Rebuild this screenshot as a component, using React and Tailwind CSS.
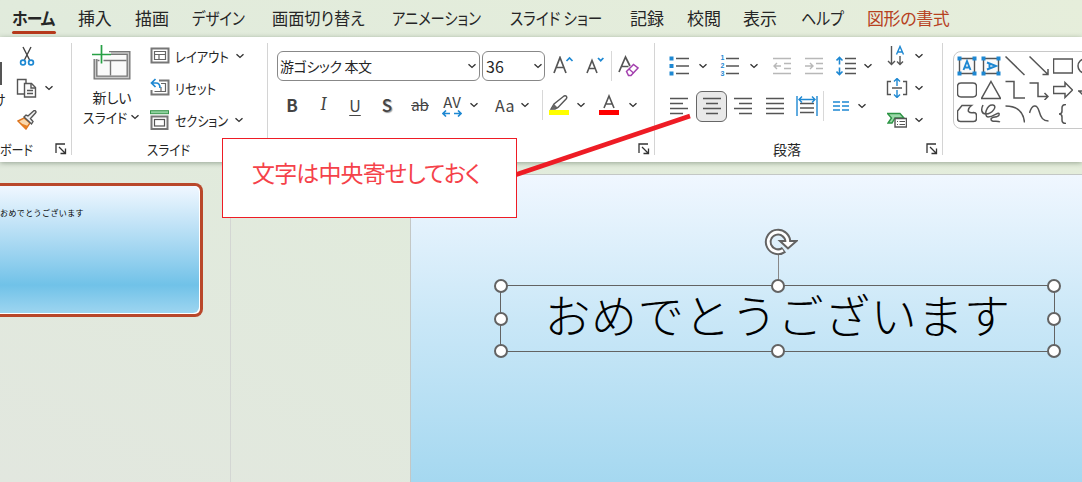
/**
 * Presentation editor: tab strip, home ribbon, slide thumbnails and canvas,
 * with a callout that points at the "center" alignment button.
 */
const TABS = [
    { label: "挿入", className: "w-[57px]", textClass: "tracking-[-0.3px]" },
    { label: "描画", className: "w-[57px]", textClass: "" },
    { label: "デザイン", className: "w-[80px]", textClass: "scale-x-[0.85]" },
    { label: "画面切り替え", className: "w-[120px]", textClass: "scale-x-[0.95]" },
    { label: "アニメーション", className: "w-[118px]", textClass: "scale-x-[0.84]" },
    { label: "スライド ショー", className: "w-[120px]", textClass: "scale-x-[0.86]" },
    { label: "記録", className: "w-[57px]", textClass: "" },
    { label: "校閲", className: "w-[56px]", textClass: "" },
    { label: "表示", className: "w-[58px]", textClass: "" },
    { label: "ヘルプ", className: "w-[66px]", textClass: "scale-x-[0.88]" },
];

function Icon({ w = 20, h = 20, className = "", children }) {
    return (
        <svg
            width={w}
            height={h}
            viewBox={`0 0 ${w} ${h}`}
            fill="none"
            stroke="#555"
            strokeWidth="1.4"
            className={`shrink-0 ${className}`}
        >
            {children}
        </svg>
    );
}

function Cell({ className = "w-8", children }) {
    return (
        <div className={`flex h-8 shrink-0 items-center justify-center ${className}`}>
            {children}
        </div>
    );
}

function Chevron({ className = "w-4" }) {
    return (
        <Cell className={className}>
            <Icon w={10} h={6}>
                <path d="M1.5 1.2 5 4.4 8.5 1.2" stroke="#333" strokeWidth="1.4" />
            </Icon>
        </Cell>
    );
}

function Divider() {
    return <div className="h-[30px] w-px shrink-0 bg-[#d8d8d8]" />;
}

function Launcher() {
    return (
        <Icon w={12} h={12} className="mr-1">
            <path d="M1 10V1h9M4 4l6 6M10.5 5.5v5h-5" stroke="#333" strokeWidth="1.3" />
        </Icon>
    );
}

function Group({ label, launcher = true, className = "", labelClass = "", children }) {
    return (
        <section className={`flex h-[125px] shrink-0 items-start ${className}`}>
            <div className="flex h-full min-w-0 grow flex-col pt-[3px]">
                <div className="flex h-24">{children}</div>
                <div className="flex h-[26px] items-center">
                    <div className="grow whitespace-nowrap text-sm">
                        <span className={`inline-block origin-left ${labelClass}`}>{label}</span>
                    </div>
                    {launcher && <Launcher />}
                </div>
            </div>
            <div className="mt-1.5 h-28 w-px shrink-0 bg-[#d4d4d4]" />
        </section>
    );
}

function ClipboardGroup() {
    return (
        <Group label="ボード" className="w-[72px]" labelClass="scale-x-[0.86]">
            <div className="w-4 shrink-0 overflow-hidden">
                <div className="mt-[22px] h-[23px] w-[1.5px] bg-[#555]" />
                <div className="-ml-2 mt-1 text-sm">け</div>
            </div>
            <div>
                <Cell className="w-[21px]">
                    <Icon w={16}>
                        <path d="M4 1 10.6 14M12 1 5.4 14" stroke="#444" />
                        <circle cx="4" cy="16.5" r="2.4" stroke="#1e88d2" strokeWidth="1.7" />
                        <circle cx="12" cy="16.5" r="2.4" stroke="#1e88d2" strokeWidth="1.7" />
                    </Icon>
                </Cell>
                <Cell className="w-[21px]">
                    <Icon w={21}>
                        <path d="M8 16H1.5V1.5H10V5" />
                        <path d="M8.5 5.5h7l4 4v9.500h-11z" fill="#fafafa" />
                        <path d="M15 5.500V10h4.500M11 12.500h6M11 15.500h6" />
                    </Icon>
                </Cell>
                <Cell className="w-[21px]">
                    <Icon>
                        <path d="m1 11 6-3 6 5-4 6z" fill="#f9d8ac" stroke="#dd741d" />
                        <path d="m3 13 8 3-2.500 3z" fill="#e98023" stroke="none" />
                        <path d="m7 7 7.500 7 1.500-2.500-2.500-3 5-5.500a1.300 1.300 0 0 0-2-2l-5.500 5L9 5z" fill="#eee" />
                    </Icon>
                </Cell>
            </div>
            <div className="pt-8">
                <Chevron className="ml-1 w-4" />
            </div>
        </Group>
    );
}

function SlidesGroup() {
    return (
        <Group
            label="スライド"
            launcher={false}
            className="w-[196px]"
            labelClass="ml-[75px] scale-x-90"
        >
            <div className="ml-2.5 flex w-[60px] flex-col items-center pt-[5px]">
                <Icon w={40} h={35}>
                    <path d="M3.500 14v18.500h33V8H17" stroke="#777" strokeWidth="4" fill="#fafafa" />
                    <path d="M3.500 14v18.500h33V8H17" stroke="#c9c9c9" strokeWidth="1.300" />
                    <path d="M5.500 15.500h29M18.500 15.500v15" stroke="#777" />
                    <path d="M0 9.500h19M9.500 0v18.500" stroke="#fff" strokeWidth="4" />
                    <path d="M0 9.500h19M9.500 0v18.500" stroke="#27a045" strokeWidth="1.700" />
                </Icon>
                <div className="mt-[7px] h-5 text-sm leading-5">新しい</div>
                <div className="flex h-5 items-center whitespace-nowrap text-sm leading-5">
                    <span className="w-[44px] origin-left scale-x-[0.92]">スライド</span>
                    <Chevron className="ml-0.5 w-3" />
                </div>
            </div>
            <div className="ml-2 whitespace-nowrap text-sm">
                <div className="flex h-8 items-center">
                    <Icon>
                        <rect x="1.500" y="2.500" width="17" height="14" strokeWidth="2" stroke="#777" />
                        <path d="M4.500 5.500h11v8h-11zM4.500 8.500h11M9 8.500v5" stroke="#666" strokeWidth="1.200" />
                    </Icon>
                    <span className="ml-[5px] w-14 origin-left scale-x-[0.88]">レイアウト</span>
                    <Chevron className="ml-px w-4" />
                </div>
                <div className="flex h-8 items-center">
                    <Icon>
                        <path d="M9 2.500h9.500v14h-17V12" strokeWidth="2" stroke="#777" />
                        <path d="M11 5.500h4.500v8h-11M11 9v4" strokeWidth="1.200" stroke="#666" />
                        <path d="M5.500 1 1.500 5l4 4M2 5h4q4 0 4 5" stroke="#1e88d2" strokeWidth="1.700" />
                    </Icon>
                    <span className="ml-[5px] w-14 origin-left scale-x-[0.88]">リセット</span>
                </div>
                <div className="flex h-8 items-center">
                    <Icon>
                        <rect x="0.500" y="0.700" width="18" height="3" fill="#8fd19e" stroke="#39964d" strokeWidth="1" />
                        <rect x="1.500" y="6.500" width="16" height="12.500" strokeWidth="2" stroke="#777" />
                        <rect x="4.500" y="9.500" width="10" height="6.500" strokeWidth="1.200" />
                    </Icon>
                    <span className="ml-[5px] w-14 origin-left scale-x-[0.86]">セクション</span>
                    <Chevron className="w-4" />
                </div>
            </div>
        </Group>
    );
}

function FontGroup() {
    return (
        <Group label="" className="w-[387px]">
            <div className="flex grow flex-col">
                <div className="mt-[11px] flex h-[30px] items-center pl-[9px]">
                    <div className="flex h-[30px] w-[203px] items-center justify-between rounded-md border border-[#888] pl-0.5 pr-px">
                        <span className="text-sm tracking-[-0.4px]">游ゴシック 本文</span>
                        <Chevron className="w-3" />
                    </div>
                    <div className="ml-0.5 flex h-[30px] w-[63px] items-center justify-between rounded-md border border-[#888] pl-[3px]">
                        <span className="text-base">36</span>
                        <Chevron className="w-3" />
                    </div>
                    <Cell className="ml-0.5 w-8">
                        <Icon w={22} h={20}>
                            <path d="M2 17 8 1.500 14 17M4.500 11.500h7.500" strokeWidth="1.700" />
                            <path d="m14.500 5 3-3 3 3" stroke="#1e88d2" strokeWidth="1.700" />
                        </Icon>
                    </Cell>
                    <Cell className="w-8">
                        <Icon w={20} h={20}>
                            <path d="M2 17 7 4.500 12 17M4 12.500h6.500" strokeWidth="1.600" />
                            <path d="m13 2 2.700 2.700L18.400 2" stroke="#1e88d2" strokeWidth="1.700" />
                        </Icon>
                    </Cell>
                    <Divider />
                    <Cell className="w-8">
                        <Icon w={22} h={22}>
                            <path d="M2 17 8.500 2 13 11M4.500 11.500h7" strokeWidth="1.700" />
                            <path d="m9.500 16.500 7-7 4.500 3.500-7 7.500h-2.500z" stroke="#a33fae" fill="#fff" strokeWidth="1.500" />
                            <path d="m12 14 4.500 4" stroke="#a33fae" />
                        </Icon>
                    </Cell>
                </div>
                <div className="mt-2 flex h-8 items-center pl-2 text-base text-[#444]">
                    <Cell><b className="text-[17px]">B</b></Cell>
                    <Cell className="w-[31px]"><i className="font-serif text-lg">I</i></Cell>
                    <Cell><span className="underline underline-offset-[3px]">U</span></Cell>
                    <Cell><span className="text-[17px] font-medium [text-shadow:1px_1px_1px_#999]">S</span></Cell>
                    <Cell className="w-[34px]"><span className="text-[15px] line-through">ab</span></Cell>
                    <Cell className="w-[30px]">
                        <div className="flex flex-col items-center">
                            <span className="h-4 text-[15px] leading-4">AV</span>
                            <Icon w={20} h={7}>
                                <path d="M8 3.500H1M4 .500l-3 3 3 3M12 3.500h7M16 .500l3 3-3 3" stroke="#1e88d2" strokeWidth="1.600" />
                            </Icon>
                        </div>
                    </Cell>
                    <Chevron className="w-3.5" />
                    <Cell className="ml-1.5 w-9"><span className="tracking-wide">Aa</span></Cell>
                    <Chevron className="-ml-1 w-3" />
                    <div className="ml-[11px]"><Divider /></div>
                    <Cell className="w-8">
                        <Icon w={22} h={22}>
                            <path d="m3 15 3-5 10-8c2-1 3.500 1 2.500 2.500L10 13.500l-3 1.500z" />
                            <path d="m6 10 4 4-7 1.500z" fill="#666" stroke="none" />
                            <path d="M1 18.500h20" stroke="#ff0" strokeWidth="5" />
                        </Icon>
                    </Cell>
                    <Chevron className="-ml-0.5 w-4" />
                    <Cell className="ml-1 w-8">
                        <Icon w={20} h={22}>
                            <path d="M5 14 10 2l5 12M6.500 10h7" strokeWidth="1.600" />
                            <path d="M0 18.500h20" stroke="red" strokeWidth="5" />
                        </Icon>
                    </Cell>
                    <Chevron className="w-4" />
                </div>
            </div>
        </Group>
    );
}

function Lines({ d }) {
    return (
        <Icon>
            <path d={d} strokeWidth="1.600" />
        </Icon>
    );
}

function ParagraphGroup() {
    return (
        <Group label="段落" className="w-[288px]" labelClass="ml-[118px]">
            <div className="flex w-[225px] shrink-0 flex-col">
                <div className="mt-2.5 flex h-8 items-center pl-2">
                    <Cell>
                        <Icon>
                            <path d="M7 2.500h13M7 10h13M7 17.500h13" strokeWidth="1.600" />
                            <path d="M.500 2.500h4M.500 10h4M.500 17.500h4" stroke="#1e88d2" strokeWidth="4" />
                        </Icon>
                    </Cell>
                    <Chevron />
                    <Cell className="ml-[3px] w-8">
                        <div className="flex items-center gap-0.5">
                            <div className="flex flex-col font-['Liberation_Sans',sans-serif] text-[7px] font-bold leading-[8px] text-[#1e88d2]">
                                <span>1</span>
                                <span>2</span>
                                <span>3</span>
                            </div>
                            <Icon w={13}>
                                <path d="M0 2.500h13M0 10h13M0 17.500h13" strokeWidth="1.600" />
                            </Icon>
                        </div>
                    </Cell>
                    <Chevron />
                    <Cell className="ml-1 w-8">
                        <Icon>
                            <path d="M1 2.500h18M12 7.500h7M12 12.500h7M1 17.500h18M9 10H2M5 7l-3 3 3 3" stroke="#b8b8b8" />
                        </Icon>
                    </Cell>
                    <Cell>
                        <Icon>
                            <path d="M1 2.500h18M12 7.500h7M12 12.500h7M1 17.500h18M1 10h8M6 7l3 3-3 3" stroke="#b8b8b8" />
                        </Icon>
                    </Cell>
                    <Cell>
                        <Icon>
                            <path d="M9 2.500h11M9 7.500h11M9 12.500h11M9 17.500h11" />
                            <path d="M3.500 2v6.500M.500 4.500l3-3 3 3M3.500 11.500V18M.500 15.500l3 3 3-3" stroke="#1e88d2" strokeWidth="1.600" />
                        </Icon>
                    </Cell>
                    <Chevron className="-ml-0.5 w-4" />
                </div>
                <div className="mt-2 flex h-8 items-center pl-2">
                    <Cell><Lines d="M1 2.500h18M1 7.500h13M1 12.500h18M1 17.500h13" /></Cell>
                    <div className="ml-px flex h-[31px] w-[31px] items-center justify-center rounded-md border border-[#666] bg-[#e9e9e9]">
                        <Lines d="M1 2.500h18M4 7.500h12M1 12.500h18M4 17.500h12" />
                    </div>
                    <Cell><Lines d="M1 2.500h18M6 7.500h13M1 12.500h18M6 17.500h13" /></Cell>
                    <Cell><Lines d="M1 2.500h18M1 7.500h18M1 12.500h18M1 17.500h18" /></Cell>
                    <Cell>
                        <Icon w={22} h={22}>
                            <path d="M4 8.500h14M4 13h14M4 17.500h14" />
                            <path d="M1 1v20M21 1v20M3 4.500h16M6 1.500l-3 3 3 3M16 1.500l3 3-3 3" stroke="#1e88d2" />
                        </Icon>
                    </Cell>
                    <Divider />
                    <Cell className="w-[34px]">
                        <Icon w={16} h={12}>
                            <path d="M0 2h7M0 6h7M0 10h7M9 2h7M9 6h7M9 10h7" stroke="#1e88d2" />
                        </Icon>
                    </Cell>
                    <Chevron className="-ml-1 w-4" />
                </div>
            </div>
            <div>
                <div className="flex">
                    <Cell className="w-[34px]">
                        <Icon w={20} h={22}>
                            <path d="M4.500 1v18M1 16l3.500 3.500L8 16M13 11v8.500M10 16.500l3 3 3-3" />
                            <path d="m9.500 9.500 3.500-8 3.500 8M11 7h4" stroke="#1e88d2" />
                        </Icon>
                    </Cell>
                    <Chevron className="w-2.5" />
                </div>
                <div className="flex">
                    <Cell className="w-[34px]">
                        <Icon w={22} h={20}>
                            <path d="M5 3.500H1.500v13H5M17 3.500h3.500v13H17M6 10h10" />
                            <path d="M11 1v7M8 3.500l3-3 3 3M11 12v7M8 16.500l3 3 3-3" stroke="#1e88d2" />
                        </Icon>
                    </Cell>
                    <Chevron className="w-2.5" />
                </div>
                <div className="flex">
                    <Cell className="w-[34px]">
                        <Icon w={20}>
                            <path d="M.500 3.500H13l4 4.500H8l-3 5H1l3.500-5z" fill="#9bd8a8" stroke="#2c9444" />
                            <path d="M8 8.500h11.500v8.500H8z" fill="#fff" />
                            <path d="M10 11.500h1M12.500 11.500H18M10 14.500h1M12.500 14.500H18" strokeWidth="1.100" />
                        </Icon>
                    </Cell>
                    <Chevron className="w-2.5" />
                </div>
            </div>
        </Group>
    );
}

function TextBoxShape({ vertical = false }) {
    return (
        <div className="flex h-6 w-6 items-center justify-center">
            <Icon>
                <path d="M2.500 2.500h15v15h-15z" fill="#fafafa" />
                <path
                    d="M.500 2.500h4M15.500 2.500h4M.500 17.500h4M15.500 17.500h4"
                    stroke="#1e88d2"
                    strokeWidth="4"
                />
                <g transform={vertical ? "rotate(90 10 10)" : undefined}>
                    <path d="m6.500 14 3.500-9 3.500 9M7.500 11.500h5" stroke="#1e88d2" strokeWidth="1.900" />
                </g>
            </Icon>
        </div>
    );
}

// outline shapes of the gallery, row by row
const SHAPES = [
    "M.5.500 19.500 19",
    "M.5.500 19 18.500M19 13v5.500h-5.500",
    "M.500 3h19v14H.500z",
    "M8 3a7 7 0 0 0 0 14h8V3z",
    "M4 3h12q3.500 0 3.500 3.500v7Q19.500 17 16 17H4q-3.500 0-3.500-3.500v-7Q.500 3 4 3z",
    "M10 1.500 19.500 18.500H.500z",
    "M.500 1.500H9v16.500h11",
    "M.500 3H9v13.500h10M15.500 13l3.500 3.500-3.500 3.500",
    "M.500 6.500H12V2.500l7.500 7.500-7.500 7.500v-4H.500z",
    "M1 11h8v-8M2 11l5 5",
    "M5 1.500h9.500q-4 3-3 6 2 2 5 1 3 0 3 3v3q0 3-3 3h-13q-3 0-3-3V7z",
    "M2 1C0 5 0 10 5 10c6 0 12-8 7-9C6 0 2 12 7 13c6 0 12-7 11-2-1 3-7 1-8 4 0 4 6 1 9 3",
    "M.500 2Q18 2 19.500 18.500",
    "M.500 9C3 0 8 0 10 7s4 10 9.500 10",
    "M13 .500q-4 0-4 3.500v3q0 3-3 3 3 0 3 3v3q0 3.500 4 3.500",
];

function DrawingGroup() {
    return (
        <Group label="" launcher={false} className="w-[150px]">
            <div className="ml-2.5 mt-[11px] grid h-[78px] w-[170px] shrink-0 auto-rows-[24px] grid-cols-[repeat(6,24px)] rounded-lg border border-[#c8c8c8] pl-px pt-0.5">
                <TextBoxShape />
                <TextBoxShape vertical />
                {SHAPES.map((d, i) => (
                    <div
                        key={d}
                        className={`flex h-6 w-6 items-center justify-center ${i === 4 || i === 10 ? "col-start-1" : ""}`}
                    >
                        <Icon>
                            <path d={d} strokeWidth="1.500" />
                        </Icon>
                    </div>
                ))}
            </div>
        </Group>
    );
}

function Handle({ className }) {
    return (
        <div
            className={`absolute h-3.5 w-3.5 -translate-x-1/2 -translate-y-1/2 rounded-full border-2 border-[#636363] bg-white ${className}`}
        />
    );
}

function Slide() {
    return (
        <div className="relative ml-[179px] mt-3 h-[308px] grow border-l border-t border-[#c3c7c5] bg-linear-to-b from-[#f0f7ff] via-[#c9e7f7] via-48% to-[#a5d8f0]">
            <div className="absolute left-[89px] top-[110px] flex h-[67px] w-[555px] items-center justify-center border border-[#636363]">
                <span className="-mt-[11px] whitespace-nowrap text-[46px] font-light leading-none tracking-[0.6px] text-black [font-feature-settings:normal]">
                    おめでとうございます
                </span>
                <div className="absolute left-1/2 -top-8 h-8 w-px bg-[#888]" />
                <Icon w={34} h={28} className="absolute left-[263px] -top-[58px]">
                    <path d="M20 21.700A9.800 9.800 0 1 1 23.800 13" stroke="#636363" strokeWidth="6.800" />
                    <path d="m16 13 8 7.500 8.500-7.500z" fill="#fff" stroke="#636363" strokeWidth="2" />
                    <path d="M19 22.400A9.800 9.800 0 1 1 23.800 14.500" stroke="#fff" strokeWidth="2.800" />
                </Icon>
                <Handle className="left-0 top-0" />
                <Handle className="left-1/2 top-0" />
                <Handle className="left-full top-0" />
                <Handle className="left-0 top-1/2" />
                <Handle className="left-full top-1/2" />
                <Handle className="left-0 top-full" />
                <Handle className="left-1/2 top-full" />
                <Handle className="left-full top-full" />
            </div>
        </div>
    );
}

function Callout() {
    return (
        <>
            <svg className="absolute left-[510px] top-[110px] z-20" width="190" height="72">
                <path d="M5 65 180 6" stroke="#ee1c25" strokeWidth="4.500" />
            </svg>
            <div className="absolute left-[222px] top-[138px] z-20 flex h-20 w-[295px] items-center border border-[#ee1c25] bg-white pl-[29px]">
                <span className="-mt-3 whitespace-nowrap text-[23px] tracking-[-0.85px] text-[#f5424a]">
                    文字は中央寄せしておく
                </span>
            </div>
        </>
    );
}

export default function App() {
    return (
        <div className="relative flex h-[482px] w-[1082px] flex-col overflow-hidden bg-linear-to-tr from-[#e2e7df] via-[#e1ebdc] to-[#e6eedb] font-['Noto_Sans_CJK_JP',sans-serif] text-[#262626] [font-feature-settings:'palt']">
            <nav className="flex h-[37px] shrink-0 items-start whitespace-nowrap pl-3 text-[17px]">
                <div className="mr-[22px] flex w-11 flex-col font-bold">
                    <span className="h-[31px] origin-left scale-x-[0.93] leading-[36px] tracking-[-1px]">ホーム</span>
                    <span className="h-[3px] rounded-full bg-[#b7391c]" />
                </div>
                {TABS.map((tab) => (
                    <div key={tab.label} className={`shrink-0 leading-[36px] ${tab.className}`}>
                        <span className={`inline-block origin-left ${tab.textClass}`}>
                            {tab.label}
                        </span>
                    </div>
                ))}
                <div className="leading-[36px] tracking-[-0.4px] text-[#b7411f]">図形の書式</div>
            </nav>
            <div className="z-10 flex h-[125px] shrink-0 bg-white shadow-[0_1px_5px_rgba(60,80,60,0.45)]">
                <ClipboardGroup />
                <SlidesGroup />
                <FontGroup />
                <ParagraphGroup />
                <DrawingGroup />
            </div>
            <main className="flex grow">
                <aside className="w-[231px] shrink-0 border-r border-[#d3d6d3] pt-[21px]">
                    <div className="h-[134px] w-[203px] rounded-r-lg border-y-[3px] border-r-[3px] border-[#b9472a] bg-white pb-px pr-px">
                        <div className="h-full rounded-r-md bg-linear-to-b from-[#f0f7ff] via-[#70c2e8] via-78% to-[#9dd5f0] pt-5 text-[8px] leading-[14px] tracking-[0.4px] text-black [font-feature-settings:normal]">
                            おめでとうございます
                        </div>
                    </div>
                </aside>
                <Slide />
            </main>
            <Callout />
        </div>
    );
}
